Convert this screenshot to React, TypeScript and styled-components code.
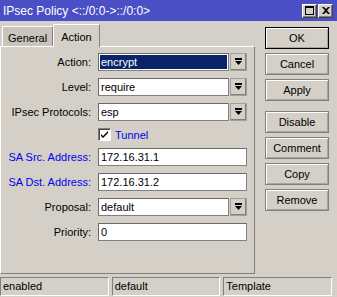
import React from "react";
import styled, { createGlobalStyle } from "styled-components";

const Global = createGlobalStyle`
  html, body {
    margin: 0;
    padding: 0;
    background: #d4d0c8;
  }
  * {
    box-sizing: border-box;
  }
`;

const Window = styled.div`
  width: 337px;
  height: 297px;
  background: #d4d0c8;
  font-family: "Liberation Sans", Arial, sans-serif;
  font-size: 11px;
  color: #000;
  display: flex;
  flex-direction: column;
  overflow: hidden;
`;

const TitleBar = styled.div`
  height: 21px;
  background: #4b4fc6;
  display: flex;
  align-items: center;
  padding: 0 4px 0 3px;
  color: #fff;
  font-size: 12px;
`;

const Title = styled.span`
  flex: 1;
  white-space: nowrap;
`;

const TitleButton = styled.div`
  width: 15px;
  height: 14px;
  margin-left: 1px;
  background: #d4d0c8;
  border: 1px solid;
  border-color: #fff #404040 #404040 #fff;
  box-shadow: inset -1px -1px 0 #808080;
  display: flex;
  align-items: center;
  justify-content: center;
`;

const Body = styled.div`
  flex: 1;
  display: flex;
  padding-top: 3px;
`;

const Left = styled.div`
  width: 255px;
  display: flex;
  flex-direction: column;
`;

const Tabs = styled.div`
  display: flex;
  align-items: flex-end;
  padding-left: 2px;
  height: 22px;
`;

const Tab = styled.div<{ $active?: boolean }>`
  height: ${(p) => (p.$active ? "23px" : "20px")};
  padding: ${(p) => (p.$active ? "2px 7px 0 7px" : "2px 5px 0 5px")};
  background: ${(p) => (p.$active ? "#d4d0c8" : "#c8c4bc")};
  border-top: 1px solid #fff;
  border-left: 1px solid #fff;
  border-right: 1px solid #808080;
  font-size: 11px;
  display: flex;
  align-items: center;
  position: relative;
  z-index: ${(p) => (p.$active ? 1 : 0)};
  margin-bottom: ${(p) => (p.$active ? "-1px" : "0")};
`;

const Panel = styled.div`
  height: 228px;
  border-top: 1px solid #fff;
  border-left: 1px solid #fff;
  border-right: 1px solid #808080;
  border-bottom: 1px solid #808080;
  padding: 6px 8px 0 0;
  display: grid;
  grid-template-columns: 90px 149px;
  column-gap: 7px;
  row-gap: 7px;
  align-content: start;
`;

const Label = styled.div<{ $blue?: boolean }>`
  text-align: right;
  height: 18px;
  line-height: 18px;
  white-space: nowrap;
  color: ${(p) => (p.$blue ? "#0000ee" : "#000")};
`;

const FieldRow = styled.div`
  display: flex;
  height: 18px;
  gap: 1px;
`;

const Input = styled.div`
  flex: 1;
  height: 18px;
  border: 1px solid #808080;
  border-top-color: #6a6a6a;
  border-left-color: #6a6a6a;
  background: #fff;
  padding: 1px;
  display: flex;
`;

const InputText = styled.span<{ $selected?: boolean }>`
  flex: 1;
  line-height: 14px;
  padding-left: 1px;
  background: ${(p) => (p.$selected ? "#0a246a" : "transparent")};
  color: ${(p) => (p.$selected ? "#fff" : "#000")};
  white-space: nowrap;
`;

const DropButton = styled.div`
  width: 17px;
  height: 18px;
  background: #d4d0c8;
  border: 1px solid;
  border-color: #fff #404040 #404040 #fff;
  box-shadow: inset -1px -1px 0 #808080;
  outline: 1px solid #a0a0a0;
  outline-offset: -1px;
  display: flex;
  align-items: center;
  justify-content: center;
`;

const CheckRow = styled.div`
  grid-column: 2;
  display: flex;
  align-items: center;
  gap: 4px;
  height: 13px;
  color: #0000ee;
`;

const CheckBox = styled.div`
  width: 13px;
  height: 13px;
  background: #fff;
  border: 1px solid;
  border-color: #808080 #fff #fff #808080;
  box-shadow: inset 1px 1px 0 #404040;
  display: flex;
  align-items: center;
  justify-content: center;
`;

const Buttons = styled.div`
  margin-left: 10px;
  padding-top: 3px;
  display: flex;
  flex-direction: column;
  gap: 4px;
`;

const Button = styled.div<{ $default?: boolean; $gap?: boolean }>`
  width: 64px;
  height: 22px;
  margin-top: ${(p) => (p.$gap ? "6px" : "0")};
  border: 1px solid ${(p) => (p.$default ? "#000" : "#808080")};
  box-shadow: inset 1px 1px 0 #fff, inset -1px -1px 0 #a8a49c;
  display: flex;
  align-items: center;
  justify-content: center;
`;

const StatusBar = styled.div`
  height: 23px;
  display: flex;
  gap: 3px;
  padding: 3px 5px 1px 0;
`;

const StatusCell = styled.div`
  flex: 1;
  border: 1px solid;
  border-color: #808080 #fff #fff #808080;
  padding-left: 2px;
  line-height: 17px;
`;

const Arrow = () => (
  <svg width="7" height="8" viewBox="0 0 7 8">
    <rect x="0" y="0" width="7" height="2" fill="#000" />
    <polygon points="0,3 7,3 3.5,7" fill="#000" />
  </svg>
);

function Select({ value, selected }: { value: string; selected?: boolean }) {
  return (
    <FieldRow>
      <Input>
        <InputText $selected={selected}>{value}</InputText>
      </Input>
      <DropButton>
        <Arrow />
      </DropButton>
    </FieldRow>
  );
}

function Text({ value }: { value: string }) {
  return (
    <FieldRow>
      <Input>
        <InputText>{value}</InputText>
      </Input>
    </FieldRow>
  );
}

export default function App() {
  return (
    <>
      <Global />
      <Window>
        <TitleBar>
          <Title>IPsec Policy &lt;::/0:0-&gt;::/0:0&gt;</Title>
          <TitleButton>
            <svg width="9" height="9" viewBox="0 0 9 9">
              <rect x="0.5" y="0.5" width="8" height="8" fill="none" stroke="#000" />
              <rect x="0" y="0" width="9" height="2" fill="#000" />
            </svg>
          </TitleButton>
          <TitleButton>
            <svg width="8" height="7" viewBox="0 0 8 7">
              <path d="M0 0h2l2 2 2-2h2L5 3.5 8 7H6L4 5 2 7H0l3-3.5z" fill="#000" />
            </svg>
          </TitleButton>
        </TitleBar>
        <Body>
          <Left>
            <Tabs>
              <Tab>General</Tab>
              <Tab $active>Action</Tab>
            </Tabs>
            <Panel>
              <Label>Action:</Label>
              <Select value="encrypt" selected />
              <Label>Level:</Label>
              <Select value="require" />
              <Label>IPsec Protocols:</Label>
              <Select value="esp" />
              <CheckRow>
                <CheckBox>
                  <svg width="7" height="7" viewBox="0 0 7 7">
                    <path d="M0 3l2 2 5-5v2l-5 5-2-2z" fill="#000" />
                  </svg>
                </CheckBox>
                Tunnel
              </CheckRow>
              <Label $blue>SA Src. Address:</Label>
              <Text value="172.16.31.1" />
              <Label $blue>SA Dst. Address:</Label>
              <Text value="172.16.31.2" />
              <Label>Proposal:</Label>
              <Select value="default" />
              <Label>Priority:</Label>
              <Text value="0" />
            </Panel>
          </Left>
          <Buttons>
            <Button $default>OK</Button>
            <Button>Cancel</Button>
            <Button>Apply</Button>
            <Button $gap>Disable</Button>
            <Button>Comment</Button>
            <Button>Copy</Button>
            <Button>Remove</Button>
          </Buttons>
        </Body>
        <StatusBar>
          <StatusCell>enabled</StatusCell>
          <StatusCell>default</StatusCell>
          <StatusCell>Template</StatusCell>
        </StatusBar>
      </Window>
    </>
  );
}
